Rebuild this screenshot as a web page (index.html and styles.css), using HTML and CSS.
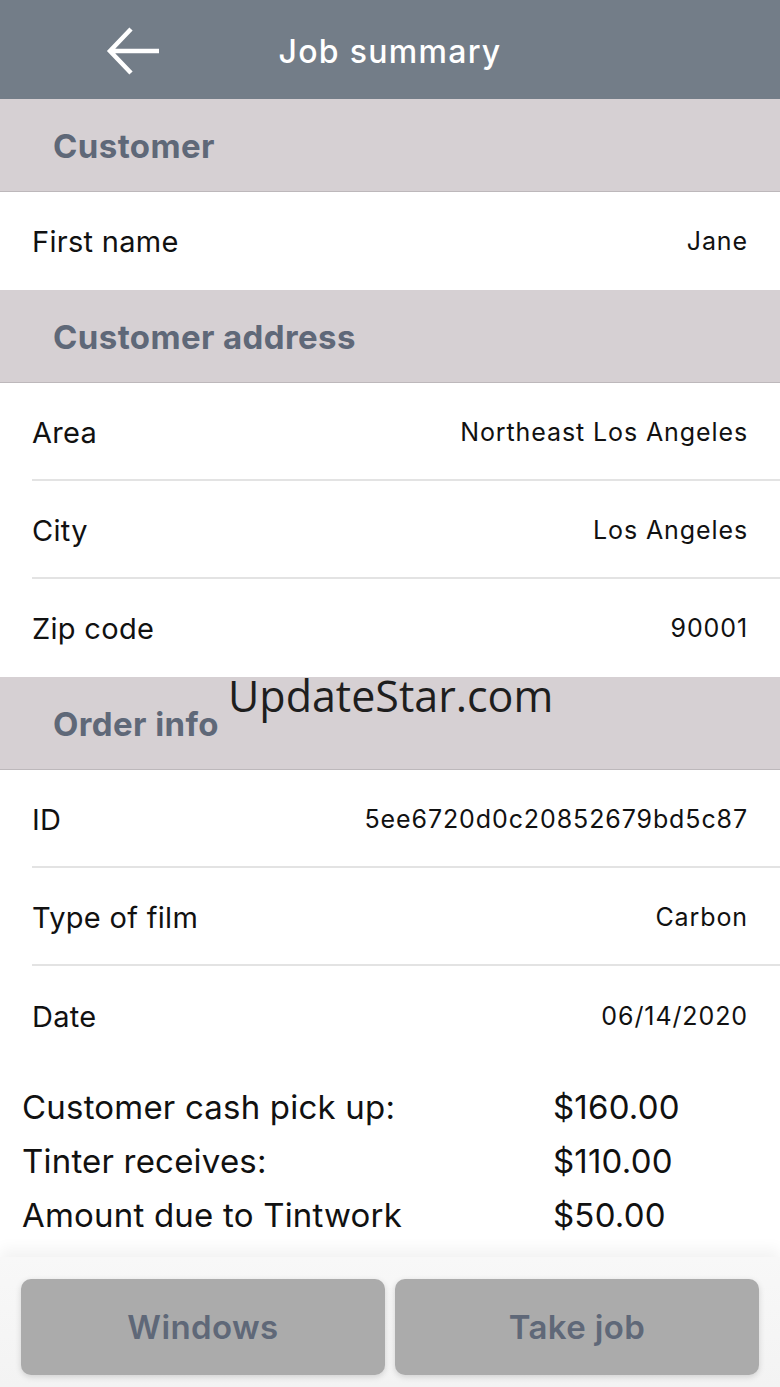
FILE: index.html
```html
<!DOCTYPE html>
<html>
<head>
<meta charset="utf-8">
<link rel="stylesheet" href="styles.css">
</head>
<body>
<div class="screen">
  <header class="topbar">
    <svg class="back" width="56" height="52" viewBox="0 0 56 52">
      <path d="M25 4 L4 26 L25 48 M4 26 L53 26" fill="none" stroke="#fff" stroke-width="4.5" stroke-linecap="butt" stroke-linejoin="miter"/>
    </svg>
    <h1 class="title">Job summary</h1>
  </header>

  <div class="section">Customer</div>
  <div class="row last"><span class="label">First name</span><span class="value">Jane</span></div>

  <div class="section">Customer address</div>
  <div class="row"><span class="label">Area</span><span class="value">Northeast Los Angeles</span></div>
  <div class="row"><span class="label">City</span><span class="value">Los Angeles</span></div>
  <div class="row last"><span class="label">Zip code</span><span class="value">90001</span></div>

  <div class="section">Order info</div>
  <div class="row"><span class="label">ID</span><span class="value">5ee6720d0c20852679bd5c87</span></div>
  <div class="row"><span class="label">Type of film</span><span class="value">Carbon</span></div>
  <div class="row last nosep"><span class="label">Date</span><span class="value">06/14/2020</span></div>

  <div class="totals">
    <div class="total"><span class="tlabel">Customer cash pick up:</span><span class="tvalue">$160.00</span></div>
    <div class="total"><span class="tlabel">Tinter receives:</span><span class="tvalue">$110.00</span></div>
    <div class="total"><span class="tlabel">Amount due to Tintwork</span><span class="tvalue">$50.00</span></div>
  </div>

  <footer class="actions">
    <button class="btn">Windows</button>
    <button class="btn">Take job</button>
  </footer>

  <div class="watermark">UpdateStar.com</div>
</div>
</body>
</html>
```

FILE: styles.css
```css
* { box-sizing: border-box; }
html, body { margin: 0; padding: 0; background: #fff; }
body { font-family: Inter, Roboto, "Liberation Sans", sans-serif; }
.screen {
  position: relative;
  width: 780px;
  height: 1387px;
  overflow: hidden;
  display: flex;
  flex-direction: column;
  background: #fff;
}
.topbar {
  height: 99px;
  flex: none;
  background: #737d88;
  display: flex;
  align-items: center;
  justify-content: center;
  position: relative;
}
.back {
  position: absolute;
  left: 106px;
  top: 25px;
}
.title {
  margin: 0 0 -4px 0;
  color: #fff;
  font-size: 32px;
  font-weight: 500;
  letter-spacing: 1.3px;
}
.section {
  height: 93px;
  flex: none;
  background: #d6d0d3;
  color: #5f6878;
  font-weight: 700;
  font-size: 33px;
  letter-spacing: 0.4px;
  padding-left: 53px;
  display: flex;
  align-items: center;
  padding-top: 2px;
  border-bottom: 1px solid #bdb8bb;
}
.row {
  height: 98px;
  flex: none;
  margin-left: 32px;
  padding-right: 32px;
  display: flex;
  align-items: center;
  justify-content: space-between;
  border-bottom: 2px solid #e3e3e3;
  padding-top: 2px;
}
.row.last { border-bottom-color: transparent; }
.row.nosep { border-bottom: none; }
.label {
  font-size: 29px;
  color: #111;
  letter-spacing: 0.3px;
}
.value {
  font-size: 25px;
  color: #111;
  letter-spacing: 0.9px;
}
.totals {
  padding: 16px 0 0 22px;
  display: flex;
  flex-direction: column;
}
.total {
  height: 54px;
  display: flex;
  align-items: center;
  font-size: 33px;
  color: #111;
  letter-spacing: 0.2px;
}
.tlabel { width: 531px; }
.actions {
  margin-top: auto;
  height: 130px;
  background: linear-gradient(#f8f8f8, #f3f3f3);
  box-shadow: 0 -8px 14px rgba(0,0,0,0.05);
  display: flex;
  gap: 10px;
  padding: 22px 21px 11px 21px;
}
.btn {
  flex: 1;
  height: 96px;
  border: none;
  border-radius: 10px;
  background: #ababab;
  color: #5f6878;
  font-family: Inter, Roboto, "Liberation Sans", sans-serif;
  font-size: 33px;
  font-weight: 600;
  letter-spacing: 0.4px;
  box-shadow: 0 2px 6px rgba(0,0,0,0.15);
}
.watermark {
  position: absolute;
  left: 228px;
  top: 666px;
  font-family: "Open Sans", "DejaVu Sans", sans-serif;
  font-size: 43px;
  color: #1e1e1e;
  letter-spacing: 0px;
}
```
